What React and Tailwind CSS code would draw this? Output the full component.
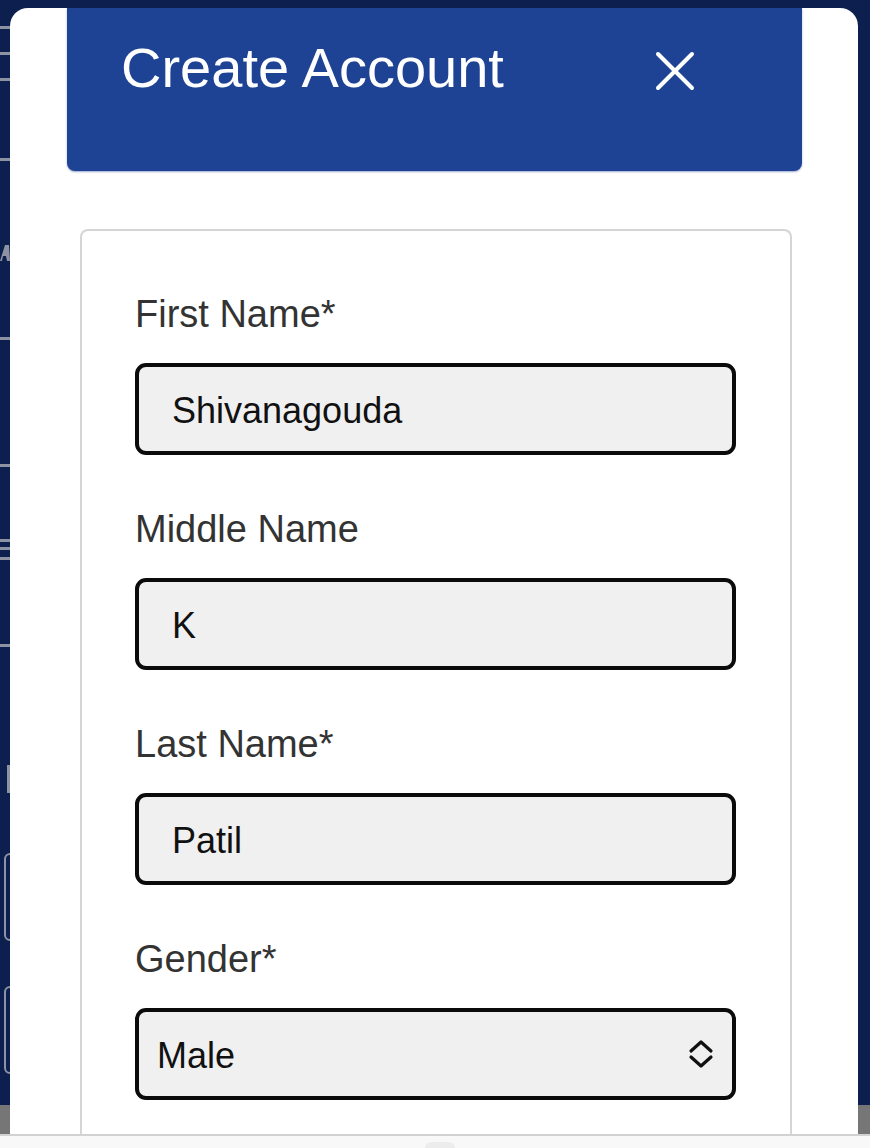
import React from "react";

const font = { fontFamily: '"Liberation Sans", Arial, Helvetica, sans-serif' };

function Field({ label, children }) {
  return (
    <div className="flex flex-col">
      <div className="h-[44px] text-[38px] leading-[44px] text-[#333333] mb-[27px] whitespace-nowrap">{label}</div>
      {children}
    </div>
  );
}

function TextBox({ value }) {
  return (
    <div className="h-[92px] w-full rounded-[11px] border-[4px] border-[#0b0b0b] bg-[#f0f0f0] flex items-center pl-[33px] pt-[4px] text-[36px] text-[#111111]">
      {value}
    </div>
  );
}

function SelectBox({ value }) {
  return (
    <div className="h-[92px] w-full rounded-[11px] border-[4px] border-[#0b0b0b] bg-[#f0f0f0] flex items-center justify-between pl-[18px] pr-[18px] pt-[4px] text-[36px] text-[#111111]">
      <span>{value}</span>
      <svg width="26" height="30" viewBox="0 0 26 30" fill="none" stroke="#111" strokeWidth="3.2" strokeLinecap="round" strokeLinejoin="round" className="-mt-[4px]">
        <path d="M3 12 L13 3 L23 12" />
        <path d="M3 18 L13 27 L23 18" />
      </svg>
    </div>
  );
}

function Bar({ className }) {
  return <div className={"h-[3px] w-[10px] bg-[#8d93a3] " + className} />;
}

export default function App() {
  return (
    <div className="w-[870px] h-[1148px] overflow-hidden flex flex-col bg-[#0d1f4f]" style={font}>
      <div className="flex flex-1 min-h-0">
        {/* left edge of underlying page */}
        <div className="w-[10px] flex flex-col">
          <Bar className="mt-[26px]" />
          <Bar className="mt-[23px]" />
          <Bar className="mt-[23px]" />
          <Bar className="mt-[77px]" />
          <svg width="10" height="18" viewBox="0 0 10 18" className="mt-[82px]">
            <path d="M0 18 L5 2 L9 2 L10 18 L7 18 L6 13 L3 13 L2 18 Z" fill="#8d93a3" />
          </svg>
          <Bar className="mt-[76px]" />
          <Bar className="mt-[124px]" />
          <Bar className="mt-[72px]" />
          <Bar className="mt-[5px]" />
          <Bar className="mt-[7px]" />
          <Bar className="mt-[84px]" />
          <div className="mt-[118px] h-[28px] w-[3px] ml-[7px] bg-[#8d93a3]" />
          <div className="mt-[60px] h-[88px] w-[12px] ml-[4px] rounded-l-[6px] border-[2px] border-[#8d93a3]" />
          <div className="mt-[45px] h-[88px] w-[12px] ml-[4px] rounded-l-[6px] border-[2px] border-[#8d93a3]" />
          <div className="mt-auto h-[29px] w-[10px] bg-[#767676]" />
        </div>

        {/* modal */}
        <div className="w-[848px] mt-[8px] bg-white rounded-t-[18px] overflow-hidden flex flex-col">
          <div className="ml-[57px] w-[735px] h-[163px] shrink-0 bg-[#1f4394] rounded-b-[8px] shadow-[0_1px_2px_rgba(30,60,140,0.45)] flex items-start justify-between pl-[54px] pr-[107px]">
            <div className="mt-[30px] text-[56px] leading-[60px] text-white whitespace-nowrap">Create Account</div>
            <svg width="40" height="40" viewBox="0 0 40 40" className="mt-[43px]" fill="none" stroke="white" strokeWidth="4" strokeLinecap="round">
              <path d="M3 3 L37 37" />
              <path d="M37 3 L3 37" />
            </svg>
          </div>

          <div className="ml-[70px] w-[712px] mt-[58px] flex-1 rounded-t-[8px] border-[2px] border-b-0 border-[#d5d5d5] pt-[61px] pl-[53px] pr-[54px] flex flex-col gap-[52px]">
            <Field label="First Name*">
              <TextBox value="Shivanagouda" />
            </Field>
            <Field label="Middle Name">
              <TextBox value="K" />
            </Field>
            <Field label="Last Name*">
              <TextBox value="Patil" />
            </Field>
            <Field label="Gender*">
              <SelectBox value="Male" />
            </Field>
          </div>
        </div>

        {/* right edge */}
        <div className="w-[12px] flex flex-col">
          <div className="mt-auto h-[29px] w-[12px] bg-[#767676]" />
        </div>
      </div>

      <div className="h-[14px] shrink-0 bg-[#f8f8f8] border-t-[2px] border-[#d2d2d2] flex justify-center items-end">
        <div className="w-[30px] h-[6px] rounded-t-[15px] bg-[#ececec] ml-[10px]" />
      </div>
    </div>
  );
}
